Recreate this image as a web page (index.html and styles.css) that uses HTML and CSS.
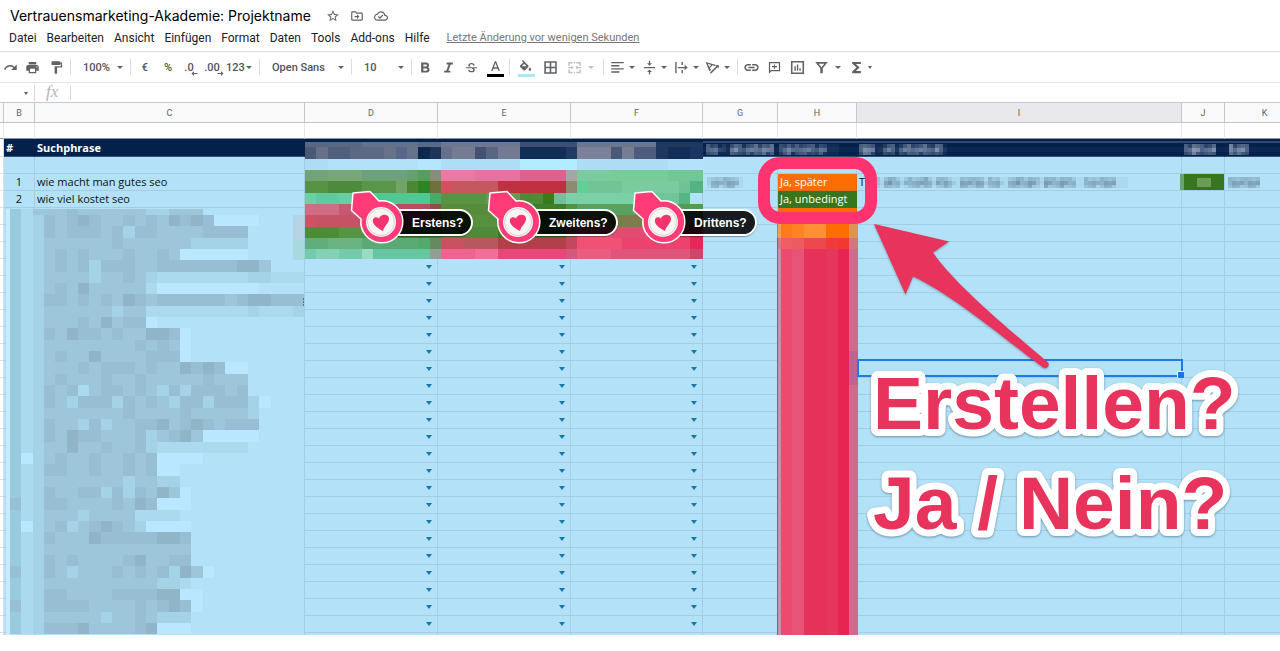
FILE: index.html
```html
<!DOCTYPE html>
<html lang="de">
<head>
<meta charset="utf-8">
<title>Vertrauensmarketing-Akademie: Projektname</title>
<link rel="stylesheet" href="styles.css">
</head>
<body>
<header class="top">
  <div class="title-row">
    <h1 class="title">Vertrauensmarketing-Akademie: Projektname</h1>
    <button class="title-btn" aria-label="Markieren"><svg viewBox="0 0 24 24"><path d="M22 9.24l-7.19-.62L12 2 9.19 8.63 2 9.24l5.46 4.73L5.82 21 12 17.27 18.18 21l-1.63-7.03L22 9.24zM12 15.4l-3.76 2.27 1-4.28-3.32-2.88 4.38-.38L12 6.1l1.71 4.04 4.38.38-3.32 2.88 1 4.28L12 15.4z"/></svg></button>
    <button class="title-btn" aria-label="Verschieben"><svg viewBox="0 0 24 24"><path d="M20 6h-8l-2-2H4c-1.100 0-2 .9-2 2v12c0 1.100.9 2 2 2h16c1.100 0 2-.9 2-2V8c0-1.100-.9-2-2-2zm0 12H4V6h5.200l2 2H20v10zm-8-4v3l4-4-4-4v3H8v2z"/></svg></button>
    <button class="title-btn" aria-label="Gespeichert"><svg viewBox="0 0 24 24"><path d="M19.350 10.040C18.670 6.590 15.640 4 12 4 9.110 4 6.600 5.640 5.350 8.040 2.340 8.360 0 10.910 0 14c0 3.310 2.690 6 6 6h13c2.760 0 5-2.240 5-5 0-2.640-2.050-4.780-4.650-4.960zM19 18H6c-2.210 0-4-1.790-4-4 0-2.050 1.530-3.760 3.560-3.970l1.070-.11.5-.95C8.080 7.140 9.940 6 12 6c2.620 0 4.880 1.860 5.390 4.430l.3 1.500 1.530.11c1.560.1 2.780 1.410 2.780 2.960 0 1.650-1.350 3-3 3zm-9-3.820l-2.090-2.090L6.500 13.500 10 17l6.010-6.010-1.410-1.410z"/></svg></button>
  </div>
  <nav class="menu">
    <button>Datei</button><button>Bearbeiten</button><button>Ansicht</button><button>Einfügen</button><button>Format</button><button>Daten</button><button>Tools</button><button>Add-ons</button><button>Hilfe</button>
    <a class="last-edit" href="#">Letzte Änderung vor wenigen Sekunden</a>
  </nav>
</header>

<div class="toolbar" role="toolbar">
  <button class="w21" aria-label="Wiederholen"><svg viewBox="0 0 24 24"><path d="M18.400 10.600C16.550 8.990 14.150 8 11.500 8c-4.650 0-8.580 3.030-9.960 7.220L3.900 16c1.050-3.190 4.050-5.500 7.600-5.500 1.950 0 3.730.72 5.120 1.880L13 16h9V7l-3.600 3.600z"/></svg></button>
  <button class="w23" aria-label="Drucken"><svg viewBox="0 0 24 24"><path d="M19 8H5c-1.660 0-3 1.340-3 3v6h4v4h12v-4h4v-6c0-1.660-1.340-3-3-3zm-3 11H8v-5h8v5zm3-7c-.55 0-1-.45-1-1s.45-1 1-1 1 .45 1 1-.45 1-1 1zm-1-9H6v4h12V3z"/></svg></button>
  <button class="w24" aria-label="Format übertragen"><svg viewBox="0 0 24 24"><path d="M18 4V3c0-.55-.45-1-1-1H5c-.55 0-1 .45-1 1v4c0 .55.45 1 1 1h12c.55 0 1-.45 1-1V6h1v4H9v11c0 .55.45 1 1 1h2c.55 0 1-.45 1-1v-9h8V4h-3z"/></svg></button>
  <i class="sep"></i>
  <span class="drop w55"><select aria-label="Zoom"><option>100%</option></select></span>
  <i class="sep"></i>
  <button class="w24">€</button>
  <button class="w22">%</button>
  <button class="w20 dec">.0<svg class="mini" viewBox="0 0 6 5"><path d="M0 2.500L2.500 0v2H6v1H2.500v2z"/></svg></button>
  <button class="w26 dec">.00<svg class="mini" viewBox="0 0 6 5"><path d="M6 2.500L3.500 0v2H0v1h3.500v2z"/></svg></button>
  <button class="w32 left2">123<i class="caret"></i></button>
  <i class="sep"></i>
  <span class="drop w87"><select aria-label="Schriftart"><option>Open Sans</option></select></span>
  <i class="sep"></i>
  <span class="drop w55"><select aria-label="Schriftgröße"><option>10</option></select></span>
  <i class="sep"></i>
  <button class="w23" aria-label="Fett"><svg viewBox="0 0 24 24"><path d="M16 11.700c1-.7 1.700-1.800 1.700-3C17.700 6 15.900 4 13.300 4H5v16h9.300c2.500 0 4.200-1.900 4.200-4.300 0-1.800-1-3.300-2.500-4zM8.600 7h4c.9 0 1.600.7 1.600 1.600s-.7 1.600-1.600 1.600h-4zm4.600 10H8.600v-3.500h4.600c.9 0 1.700.8 1.700 1.700s-.8 1.800-1.700 1.800z"/></svg></button>
  <button class="w23" aria-label="Kursiv"><svg viewBox="0 0 24 24"><path d="M9 4v3h3.200l-3.800 10H5v3h10v-3h-3.200l3.800-10H19V4z"/></svg></button>
  <button class="w23" aria-label="Durchgestrichen"><svg viewBox="0 0 24 24"><path d="M3 11.500h18v1.800h-5c.9.700 1.300 1.500 1.300 2.500 0 2.300-2 3.900-5.200 3.900-3.300 0-5.500-1.700-5.500-4.300h2.500c0 1.400 1.200 2.300 3 2.300 1.700 0 2.700-.7 2.700-1.800 0-1-.7-1.700-3-2.600H3zM7.300 10.400C7 9.800 6.900 9.200 6.900 8.600c0-2.300 2-4 5.100-4s5.200 1.700 5.200 4.200h-2.500c0-1.300-1-2.200-2.700-2.200-1.600 0-2.600.8-2.600 1.900 0 .8.400 1.300 1.400 1.900z"/></svg></button>
  <button class="w24 ink" aria-label="Textfarbe"><svg viewBox="0 0 24 24"><path d="M11 2L5 17h2.500l1.200-3.200h6.600l1.200 3.200H19L13 2h-2zm-1.500 9.600L12 4.900l2.500 6.700z"/></svg></button>
  <i class="sep"></i>
  <button class="w27 ink fill" aria-label="Füllfarbe"><svg viewBox="0 0 24 24"><path d="M16.560 8.940L7.620 0 6.210 1.410l2.380 2.380-5.150 5.150c-.59.59-.59 1.540 0 2.120l5.500 5.500c.29.29.68.44 1.060.44s.77-.15 1.060-.44l5.500-5.500c.59-.58.59-1.530 0-2.120zM5.900 10L10 5.900l3.500 4.100zM19 11.500s-2 2.170-2 3.500c0 1.100.9 2 2 2s2-.9 2-2c0-1.330-2-3.500-2-3.500z"/></svg></button>
  <button class="w23" aria-label="Rahmen"><svg viewBox="0 0 24 24"><path d="M2 2v20h20V2H2zm8.700 17.500H4.500v-6.200h6.200v6.200zm0-8.800H4.500V4.500h6.200v6.200zm8.800 8.800h-6.200v-6.200h6.200v6.200zm0-8.800h-6.200V4.500h6.200v6.200z"/></svg></button>
  <button class="w39 left5 gap6 off" aria-label="Verbinden"><svg viewBox="0 0 24 24"><path d="M2 3h7v2.400H4.400V9H2zM15 3h7v6h-2.400V5.400H15zM2 15h2.400v3.600H9V21H2zM19.600 15H22v6h-7v-2.400h4.600zM2 11h5V8.500l3.500 3.500L7 15.500V13H2zM22 11h-5V8.500L13.500 12l3.500 3.500V13h5zM11 3h2v2.400h-2zM11 18.600h2V21h-2z"/></svg><i class="caret"></i></button>
  <i class="sep"></i>
  <button class="w34 left3" aria-label="Horizontal ausrichten"><svg viewBox="0 0 24 24"><path d="M2 3h20v2.300H2zM2 8h13v2.300H2zM2 13h20v2.300H2zM2 18h13v2.300H2z"/></svg><i class="caret"></i></button>
  <button class="w32 left1" aria-label="Vertikal ausrichten"><svg viewBox="0 0 24 24"><path d="M3 11h18v2.200H3zM11 1h2v4h3l-4 4-4-4h3zM11 23h2v-4h3l-4-4-4 4h3z"/></svg><i class="caret"></i></button>
  <button class="w31 left1" aria-label="Textumbruch"><svg viewBox="0 0 24 24"><path d="M2 3h2.200v18H2zM12 3h2.200v5H12zM12 16h2.200v5H12zM6 11h11V7.500l5 4.500-5 4.500V13H6z"/></svg><i class="caret"></i></button>
  <button class="w32 left1" aria-label="Textdrehung"><svg viewBox="0 0 24 24"><path d="M1 3l17 5-2.500 1.500-3.500-1-4 4 1.500 4L7 18zM4.500 6l2.300 5 3-3zM8 20L18.500 9.500 16.500 8H22v5.500l-2-2L9.500 22z"/></svg><i class="caret"></i></button>
  <i class="sep"></i>
  <button class="w23" aria-label="Link"><svg viewBox="0 0 24 24"><path d="M2.900 12c0-1.710 1.390-3.100 3.100-3.100h5V6.500H6C3 6.500.5 9 .5 12S3 17.500 6 17.500h5v-2.400H6c-1.710 0-3.100-1.390-3.100-3.100zM7 13.200h10v-2.400H7v2.400zm11-6.700h-5v2.400h5c1.710 0 3.100 1.390 3.100 3.100s-1.390 3.100-3.100 3.100h-5v2.400h5c3 0 5.500-2.500 5.500-5.500S21 6.500 18 6.500z"/></svg></button>
  <button class="w23" aria-label="Kommentar"><svg viewBox="0 0 24 24"><path d="M3 3h18v15H7l-4 4zM5 5v12l1-1h13V5zM11 7h2v2.500h3v2h-3V14h-2v-2.500H8v-2h3z"/></svg></button>
  <button class="w23" aria-label="Diagramm"><svg viewBox="0 0 24 24"><path fill-rule="evenodd" d="M1.500 1.500h21v21h-21zM4 4v16h16V4zM7 10h2.200v7H7zM11 7h2.200v10H11zM15 13h2.200v4H15z"/></svg></button>
  <button class="w36 left4 gap6" aria-label="Filter"><svg viewBox="0 0 24 24"><path fill-rule="evenodd" d="M2 3h20l-8 10v8h-4v-8zM7.500 6l4.500 5.500L16.500 6z"/></svg><i class="caret"></i></button>
  <button class="w34 left3" aria-label="Funktionen"><svg viewBox="0 0 24 24"><path d="M19 3H5v2.500l7 6.500-7 6.500V21h14v-3.300h-8L17 12l-6-5.700h8z"/></svg><i class="caret small"></i></button>
</div>

<div class="formula">
  <button class="name-box" aria-label="Namensfeld"><i class="caret small"></i></button>
  <label class="fx" for="fx">fx</label>
  <input id="fx" class="fx-input" type="text">
</div>

<main class="sheet">
  <table class="grid">
    <colgroup><col class="cA"><col class="cB"><col class="cC"><col class="cD"><col class="cD"><col class="cF"><col class="cG"><col class="cH"><col class="cI"><col class="cJ"><col></colgroup>
    <thead><tr><th></th><th>B</th><th>C</th><th>D</th><th>E</th><th>F</th><th>G</th><th>H</th><th class="sel">I</th><th>J</th><th>K</th></tr></thead>
    <tbody id="rows">
      <tr class="blank"><td></td><td></td><td></td><td></td><td></td><td></td><td></td><td></td><td></td><td></td><td></td></tr>
      <tr class="head"><td></td><td class="hash">#</td><td>Suchphrase</td><td></td><td></td><td></td><td></td><td></td><td></td><td></td><td></td></tr>
      <tr><td></td><td></td><td></td><td></td><td></td><td></td><td></td><td></td><td></td><td></td><td></td></tr>
      <tr><td></td><td class="num">1</td><td>wie macht man gutes seo</td><td></td><td></td><td></td><td></td><td class="later">Ja, später</td><td>T</td><td></td><td></td></tr>
      <tr><td></td><td class="num">2</td><td>wie viel kostet seo</td><td></td><td></td><td></td><td></td><td class="must">Ja, unbedingt</td><td></td><td></td><td></td></tr>
      <tr><td></td><td></td><td></td><td></td><td></td><td></td><td></td><td class="later"></td><td></td><td></td><td></td></tr>
      <tr><td></td><td></td><td></td><td></td><td></td><td></td><td></td><td class="later"></td><td></td><td></td><td></td></tr>
      <tr><td></td><td></td><td></td><td></td><td></td><td></td><td></td><td></td><td></td><td></td><td></td></tr>
    </tbody>
  </table>

  <svg class="layer" id="mosaic" width="1280" height="548" viewBox="0 103 1280 548" aria-hidden="true"></svg>
  <div class="selection"></div>

  <div class="badge b1"><span>Erstens?</span></div>
  <div class="badge b2"><span>Zweitens?</span></div>
  <div class="badge b3"><span>Drittens?</span></div>
  <div class="frame"></div>

  <svg class="layer" width="1280" height="548" viewBox="0 103 1280 548">
    <defs>
      <g id="pin">
        <path d="M-28-29L-11-30.500-2-21A21 21 0 1 1-20-3L-29.500-11.500Z" fill="#ff3b78" stroke="#fff" stroke-width="1.500" stroke-linejoin="round"/>
        <circle r="15" fill="#f8f6f5"/>
        <circle r="13.500" fill="none" stroke="#d5d3d2" stroke-width="1"/>
        <path d="M2 9C-2 7-7 4-8 0c-1-4 3-6.500 6-3.500C-1-8 7-9 8-4 8.500 1 3 4 2 9Z" fill="#f5336f"/>
      </g>
    </defs>
    <use href="#pin" x="381" y="222"/>
    <use href="#pin" x="518" y="222"/>
    <use href="#pin" x="663" y="222"/>
    <path class="arrow" d="M874 224L949 241.500 933 252.500C955 285 1012 332 1047 361.500A3.500 3.500 0 0 1 1043 367.500C1005 339 950 293 913 276.500L905.500 294.500Z"/>
    <text class="callout" x="873" y="429">Erstellen?</text>
    <text class="callout" x="873" y="529">Ja / Nein?</text>
  </svg>
</main>
<script src="app.js"></script>
</body>
</html>
```
FILE: styles.css
```css
* { box-sizing: border-box; }
body { margin: 0; background: #fff; font-family: Roboto, "Liberation Sans", sans-serif; color: #202124; overflow: hidden; }
button, select, input { font: inherit; color: inherit; background: none; border: 0; padding: 0; margin: 0; }

.top { height: 51px; padding: 6px 9px 0; }
.title-row { display: flex; align-items: center; height: 20px; gap: 8px; }
.title { margin: 0 6px 0 1px; font: 400 14px/20px Inter, sans-serif; color: #000; white-space: nowrap; }
.title-btn { width: 16px; height: 16px; }
.title-btn svg { display: block; width: 14px; height: 14px; margin: 1px; fill: #5f6368; }
.menu { display: flex; align-items: center; height: 24px; gap: 10px; font-size: 12px; line-height: 16px; white-space: nowrap; }
.last-edit { color: #777; margin-left: 7px; font-size: 11px; }

.toolbar { display: flex; align-items: center; height: 32px; border-top: 1px solid #dadce0; border-bottom: 1px solid #e3e4e6; color: #505357; font-size: 11px; font-weight: 500; }
.toolbar button { display: flex; align-items: center; justify-content: center; height: 24px; flex: none; position: relative; }
.toolbar svg { width: 15px; height: 15px; fill: #5f6368; flex: none; }
.sep { width: 5px; height: 16px; flex: none; border-left: 1px solid #dadce0; margin-left: 2px; margin-right: -2px; }
.w20 { width: 20px; } .w21 { width: 21px; } .w22 { width: 22px; } .w23 { width: 23px; } .w24 { width: 24px; } .w26 { width: 26px; } .w27 { width: 27px; }
.w31 { width: 31px; } .w32 { width: 32px; } .w34 { width: 34px; } .w36 { width: 36px; } .w39 { width: 39px; } .w55 { width: 55px; } .w87 { width: 87px; }
.toolbar .left1, .toolbar .left2, .toolbar .left3, .toolbar .left4, .toolbar .left5 { justify-content: flex-start; gap: 4px; }
.toolbar .left1 { padding-left: 2px; }
.toolbar .left2 { padding-left: 1px; gap: 1px; }
.toolbar .left3 { padding-left: 4px; }
.toolbar .left4 { padding-left: 5px; }
.toolbar .left5 { padding-left: 5px; }
.toolbar .gap6 { gap: 6px; }
.off { opacity: .4; }
.caret { width: 0; height: 0; border: 3px solid transparent; border-top-color: #5f6368; border-bottom: 0; flex: none; }
.caret.small { border-width: 2px; border-top-width: 3px; border-bottom: 0; }
.drop { position: relative; flex: none; height: 20px; }
.drop select { appearance: none; width: 100%; height: 20px; padding-left: 10px; outline: 0; }
.drop::after { content: ""; position: absolute; right: 5px; top: 9px; border: 3px solid transparent; border-top-color: #5f6368; border-bottom: 0; }
.toolbar .mini { position: absolute; right: 1px; bottom: 3px; width: 7px; height: 5px; }
.ink::after { content: ""; position: absolute; left: 4px; right: 3px; bottom: 2px; height: 3px; background: #000; }
.ink.fill::after { left: 6px; right: 4px; background: #b3e1f8; }

.formula { display: flex; align-items: center; height: 20px; }
.name-box { width: 35px; height: 16px; border-right: 1px solid #d5d6d8; display: flex; align-items: center; justify-content: flex-end; padding-right: 6px; }
.fx { width: 36px; height: 14px; padding-left: 11px; border-right: 1px solid #d5d6d8; font: italic 17px/12px "Liberation Serif", serif; color: #b5b5b5; }
.fx-input { flex: 1; height: 16px; outline: 0; }

.sheet { position: relative; overflow: hidden; height: 548px; margin-top: -1px; border-top: 1px solid #c6c8ca; }
.grid { width: 1305px; min-width: 100%; table-layout: fixed; border-collapse: separate; border-spacing: 0; font: 11px/14px "Open Sans", sans-serif; color: #111; }
.cA { width: 4px; } .cB { width: 31px; } .cC { width: 270px; } .cD { width: 133px; } .cF { width: 132px; } .cG { width: 75px; } .cH { width: 79px; } .cI { width: 325px; } .cJ { width: 43px; }
th { height: 20px; padding: 0; background: #f8f9fa; border: solid #c4c6c8; border-width: 0 1px 1px 0; font: 400 9px/12px Roboto, sans-serif; color: #5f6368; }
th.sel { background: #e8e9ed; }
td { height: 17px; padding: 0 0 0 2px; background: #b3e1f8; border: solid #a3cde2; border-width: 0 1px 1px 0; white-space: nowrap; overflow: hidden; }
td:first-child { background: #fff; border-color: #dcdfe1; padding: 0; }
.num { text-align: center; padding: 0; }
.blank td { height: 16px; background: #fff; border-color: #e6e7e8; border-bottom-color: #8995a6; }
.head td { height: 18px; background: #04214b; border-color: #04214b; border-bottom-color: #35507a; color: #fff; font-weight: 700; }
.head td:first-child { background: #fff; border-color: #dcdfe1; }
.later { background: #ff6d00; border-color: #e56a12; color: #fff; }
.must { background: #38761d; border-color: #38761d; color: #fff; }
.tail td { height: 2px; border-bottom: 0; }
.pick { text-align: right; padding: 0 5px 2px 0; }
.pick::after { content: ""; display: inline-block; vertical-align: middle; border: 3px solid transparent; border-top: 4px solid #1478ad; border-bottom: 0; }

.layer { position: absolute; left: 0; top: 0; pointer-events: none; }
.selection { position: absolute; left: 857px; top: 256px; width: 326px; height: 18px; border: 2px solid #1f7ae8; }
.selection::after { content: ""; position: absolute; right: -3px; bottom: -3px; width: 6px; height: 6px; background: #1a73e8; border: solid #e4f3fc; border-width: 1px 0 0 1px; }
.frame { position: absolute; left: 758px; top: 54px; width: 119px; height: 67px; border: 12px solid #ff336f; border-radius: 22px; }
.badge { position: absolute; top: 106px; height: 27px; padding: 0 8px 0 31px; border: 2px solid #fff; border-radius: 14px; background: rgba(0, 0, 0, .88); color: #fff; font: 700 12px/24px "Liberation Sans", sans-serif; box-shadow: 0 1px 1px rgba(0, 0, 0, .35); }
.b1 { left: 379px; } .b2 { left: 516px; } .b3 { left: 661px; }
.arrow { fill: #e8335c; filter: drop-shadow(0 1px 1px rgba(0, 0, 0, .3)); }
.callout { font: 700 75px "Liberation Sans", sans-serif; fill: #e8335c; stroke: #fff; stroke-width: 14px; stroke-linejoin: round; paint-order: stroke fill; filter: drop-shadow(0 1px 1px rgba(60, 90, 110, .6)); }
```
FILE: app.js
```js
// Remaining rows: drop-down cells in D, E and F, then the cut-off last row.
const body = document.getElementById('rows');
for (let r = 0; r < 23; r++) {
  const tr = body.insertRow();
  if (r === 22) tr.className = 'tail';
  for (let c = 0; c < 11; c++) {
    const td = tr.insertCell();
    if (r < 22 && c > 2 && c < 6) td.className = 'pick';
  }
}

const svg = document.getElementById('mosaic');
function rect(x, y, w, h, fill) {
  const el = document.createElementNS('http://www.w3.org/2000/svg', 'rect');
  Object.entries({ x, y, width: w, height: h, fill, 'shape-rendering': 'crispEdges' })
    .forEach(([k, v]) => el.setAttribute(k, v));
  svg.append(el);
}
const P = 34 / 3;
const base = '#b2e1f8';

// Censored search phrases in columns B and C.
const shades = { 0: base, 1: '#b8e7ff', 2: '#abdaef', 3: '#a4d2e7', 4: '#9dc6da', 5: '#97bed2', 6: '#90b4c8', p: '#b6d3e6', q: '#a9d9df' };
const phrases = [
  '42444544444433444000000000',
  '4235456544545465651111000p',
  '4235455545355444455550000p',
  '4234444445444444333330000q',
  '4234545444544541111110000q',
  '42345453555445555555664000',
  '42344443445432222222233222',
  '42345464444421111111110000',
  '42355454546545555554566555',
  '42344444434422222222232223',
  '42344454645510000000000000',
  '42354655454466510000000000',
  '42344444444545410000000000',
  '42345446444455510000000000',
  '42344454555454465651100000',
  '42345444544544444544400000',
  '42354524554543535554500000',
  '42354355535454355355531000',
  '42344444445444454444430000',
  '42354435344556456545550000',
  '42354655444534564111110000',
  '42344644544532222222200000',
  '41345445445451111000000000',
  '42355445445451100000000000',
  '42344444443443300000000000',
  '42354455353546410000000000',
  '52355444454651110000000000',
  '42344434444222200000000000',
  '41345345654311110000000000',
  '42354446555556650000000000',
  '42344444444444440000000000',
  '42354544445644550000000000',
  '52354344454545364100000000',
  '42344444444443320000000000',
  '42355444455556611000000000',
  '52355554444545651000000000',
  '42344444344543330000000000',
  '42355564444561110000000000'
];
rect(6, 209, 4, 426, '#c9ebfd');
phrases.forEach((row, r) => {
  const y = r ? 203.667 + r * P : 209;
  const h = r ? P : 6;
  [...row].forEach((c, k) => {
    const fill = k === 0 ? (c === '5' ? '#97c0d4' : '#9acade') : shades[c];
    rect(10 + k * P, y, k === 25 ? 11 : P, h, fill);
  });
});
[298, 301, 304].forEach(y => rect(303, y, 1, 2, '#5a7684'));

// Censored status blocks, columns D to F: [top, height, [cells, colour]...]
const bands = [
  [142, 5, [5, '#5a6782'], [5, '#64718b'], [2, '#5a6985'], [7, '#6d7890'], [5, '#3d5073'], [7, '#6b768f'], [4, '#22395f']],
  [147, 11.6, [1, '#4a5876'], [1, '#66708a'], [2, '#515f7f'], [3, '#5c6985'], [1, '#66718a'], [1, '#59668a'], [1, '#66718a'], [1, '#0d284f'], [1, '#1c3459'], [1, '#66708b'], [2, '#747b93'], [1, '#435272'], [1, '#596683'], [2, '#737a92'], [4, '#122d56'], [1, '#213a62'], [3, '#7b8198'], [1, '#4b5979'], [1, '#767d95'], [2, '#4d5c7d'], [1, '#20375f'], [2, '#132e57'], [1, '#1c3560']],
  [158.6, 11.4, [2, '#addcf4'], [8, '#b1e0f8'], [2, '#b6e6ff'], [7, '#addef6'], [5, '#b2edff'], [8, '#addcf3'], [3, '#b4e2fd']],
  [170, 11.3, [2, '#72a376'], [3, '#78a674'], [4, '#6da177'], [1, '#66a06a'], [1, '#5a9c59'], [1, '#8b8c75'], [3, '#e77ba4'], [4, '#e572a0'], [4, '#dd638e'], [1, '#a7a5a5'], [3, '#7acb9e'], [5, '#76cd98'], [3, '#71c795']],
  [181.3, 11.3, [2, '#569345'], [3, '#4c8b3b'], [3, '#599649'], [1, '#73a366'], [1, '#4c8834'], [1, '#2f8323'], [1, '#6e6f3b'], [1, '#d2515e'], [4, '#c5585f'], [6, '#c13040'], [1, '#8b8c72'], [1, '#64ce97'], [3, '#72c497'], [5, '#7acb9f'], [1, '#70c195'], [1, '#52b482']],
  [192.6, 11.3, [1, '#6cd0a6'], [2, '#60ca9e'], [2, '#69cda3'], [6, '#4fc891'], [1, '#4caa69'], [4, '#5b9344'], [3, '#66994f'], [1, '#4b8a36'], [1, '#4e8b37'], [1, '#357d1c'], [1, '#72c09b'], [6, '#7bd0a8'], [4, '#72c599'], [1, '#54b586']],
  [203.9, 11.3, [3, '#cf6d86'], [3, '#c85771'], [5, '#b84c65'], [1, '#8c4f48'], [8, '#568c3c'], [3, '#407f2a'], [1, '#4d9446'], [6, '#5aa05e'], [5, '#549b53']],
  [215.2, 11.3, [1, '#d05067'], [4, '#c65365'], [6, '#a94352'], [1, '#75423c'], [8, '#57903e'], [3, '#397b23'], [1, '#657a3e'], [4, '#777d49'], [3, '#7f7b4c'], [3, '#668c50'], [1, '#5b8d47']],
  [226.5, 11.3, [3, '#4d8b37'], [4, '#579245'], [3, '#43872f'], [1, '#3a812d'], [1, '#467b34'], [5, '#4d8b38'], [6, '#377b24'], [1, '#ab5b55'], [3, '#ea5879'], [4, '#e14d70'], [3, '#ea3e67'], [1, '#e32556']],
  [237.8, 11.3, [2, '#62ad7c'], [3, '#6bb381'], [5, '#5baa75'], [1, '#51a96c'], [1, '#668a60'], [2, '#c8525f'], [3, '#b8575e'], [6, '#b23f49'], [1, '#c2485b'], [4, '#f05175'], [6, '#ed426d'], [1, '#e42857']],
  [249.1, 9.9, [1, '#72cbad'], [2, '#84d1b6'], [2, '#75cba9'], [1, '#9bdac4'], [5, '#65c69f'], [1, '#949e94'], [3, '#f0628f'], [2, '#f26f98'], [6, '#e84777'], [1, '#d4577c'], [3, '#eb5b82'], [7, '#df557b'], [1, '#ce466b']]
];
bands.forEach(([y, h, ...runs]) => {
  let k = 0;
  runs.forEach(([n, fill]) => {
    rect(305 + k * P, y, n * P + (k + n > 34 ? 1 : 0), h, fill);
    k += n;
  });
});

// Censored column H.
const columns = [[777.3, 1, '#c2446f'], [778.3, 2.7, '#c98db5'], [781, P, '#ec4a6f'], [792.3, P, '#e85478'], [803.6, 2 * P, '#e6325b'], [826.3, P, '#e5375c'], [837.6, P, '#e82552'], [849, 9, '#d26a90']];
columns.forEach(([x, w, fill]) => rect(x, 249, w, 386, fill));
const orange = ['#ec7420', '#e9a15c', '#ff7a18', '#ff8224', '#ff9035', '#ff6d00', '#ff6d00', '#de9353'];
const blend = ['#c2446f', '#d5788c', '#ee5e64', '#ee5a60', '#ed484e', '#f03a3c', '#f23830', '#d5767e'];
columns.forEach(([x, w], i) => { rect(x, 223, w, 15, orange[i]); rect(x, 238, w, 11, blend[i]); });
rect(849, 351, 9, 34, '#c2628f');

// Fine-grained censored text: one digit per 4px cell, higher is stronger.
function strip(x, y, text, rgb) {
  [...text].forEach((c, i) => {
    const n = Number(c);
    for (let j = 0; j < 3; j++) {
      const a = Math.max(.06, n / 10 - (j === 1 ? 0 : .15) - ((i * 7 + j * 3) % 4) / 20);
      rect(x + i * 4, y + j * 4, 4, j === 2 ? 3 : 4, `rgba(${rgb},${a.toFixed(2)})`);
    }
  });
}
rect(703, 141, 577, 2, '#30476b');
rect(703, 147, 577, 5, '#0a2852');
strip(706, 144, '55523156545565656', '205,212,228');
strip(779, 144, '456455555454211', '205,212,228');
strip(859, 144, '5765224552456555654652', '205,212,228');
strip(1184, 144, '55765556', '205,212,228');
strip(1229, 144, '75665', '205,212,228');
strip(707, 177, '355456542', '70,100,120');
strip(876, 177, '4256552455556525564226555652555225565565426555655510', '70,100,120');
strip(1084, 177, '55545655210', '70,100,120');
strip(1228, 177, '56555655', '70,100,120');
rect(1180, 174, 44, 16, '#38761d');
rect(1180, 174, 4, 16, '#6aa372');
rect(1197, 178, 14, 9, '#6b9d55');
```
